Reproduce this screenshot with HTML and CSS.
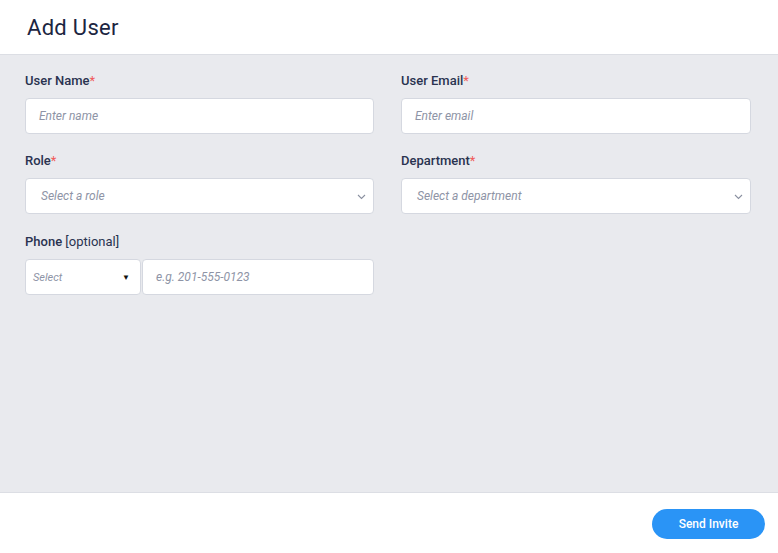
FILE: index.html
```html
<!DOCTYPE html>
<html>
<head>
<meta charset="utf-8">
<link rel="stylesheet" href="styles.css">
</head>
<body>
<div class="page">
  <header class="header"><h1 class="title">Add User</h1></header>
  <main class="body">
    <div class="grid">
      <div class="field">
        <label class="label">User Name<span class="req">*</span></label>
        <div class="input"><span class="ph">Enter name</span></div>
      </div>
      <div class="field">
        <label class="label">User Email<span class="req">*</span></label>
        <div class="input"><span class="ph">Enter email</span></div>
      </div>
      <div class="field">
        <label class="label">Role<span class="req">*</span></label>
        <div class="input select"><span class="ph">Select a role</span>
          <svg class="chev" width="9" height="6" viewBox="0 0 9 6"><path d="M1 1 L4.5 4.5 L8 1" fill="none" stroke="#8a90a0" stroke-width="1.1"/></svg>
        </div>
      </div>
      <div class="field">
        <label class="label">Department<span class="req">*</span></label>
        <div class="input select"><span class="ph">Select a department</span>
          <svg class="chev" width="9" height="6" viewBox="0 0 9 6"><path d="M1 1 L4.5 4.5 L8 1" fill="none" stroke="#8a90a0" stroke-width="1.1"/></svg>
        </div>
      </div>
      <div class="field phone-field">
        <label class="label">Phone <span class="opt">[optional]</span></label>
        <div class="phone">
          <div class="input code"><span class="ph small">Select</span><span class="tri">▼</span></div>
          <div class="input num"><span class="ph">e.g. 201-555-0123</span></div>
        </div>
      </div>
    </div>
  </main>
  <footer class="footer"><button class="btn">Send Invite</button></footer>
</div>
</body>
</html>
```
FILE: styles.css
```css
* { box-sizing: border-box; }
html, body { margin: 0; padding: 0; }
body { font-family: Roboto, "Noto Sans", sans-serif; background: #fff; }
.page { width: 778px; height: 553px; display: flex; flex-direction: column; }
.header { height: 55px; border-bottom: 1px solid #dcdee4; display: flex; align-items: center; padding-left: 27px; background: #fff; }
.title { margin: 0; font-size: 22px; font-weight: 400; color: #1c2541; letter-spacing: 0.3px; }
.body { flex: 1; background: #e9eaee; padding: 17px 28px 0 25px; }
.grid { display: grid; grid-template-columns: 349px 350px; column-gap: 27px; row-gap: 18px; }
.field { display: flex; flex-direction: column; }
.phone-field { margin-top: 1px; }
.label { font-size: 13px; font-weight: 500; color: #2a3350; line-height: 18px; margin-bottom: 8px; }
.req { color: #f05a5a; font-weight: 400; }
.opt { font-weight: 400; }
.input { height: 36px; background: #fff; border: 1px solid #d5d8e0; border-radius: 4px; display: flex; align-items: center; padding-left: 13px; position: relative; }
.ph { font-size: 12px; font-style: italic; color: #8e94a6; }
.select { padding-left: 15px; }
.chev { position: absolute; right: 7px; top: 15px; }
.phone { display: flex; gap: 1px; }
.code { width: 116px; padding-left: 7px; padding-right: 10px; justify-content: space-between; flex: none; }
.small { font-size: 11px; }
.tri { font-size: 8px; color: #111; }
.num { flex: 1; }
.footer { height: 61px; border-top: 1px solid #dcdee4; background: #fff; display: flex; justify-content: flex-end; align-items: center; padding-right: 13px; padding-top: 1px; }
.btn { width: 113px; height: 30px; border: none; border-radius: 15px; background: #2a94f6; color: #fff; font-family: Roboto, sans-serif; font-size: 12px; font-weight: 500; }
```
